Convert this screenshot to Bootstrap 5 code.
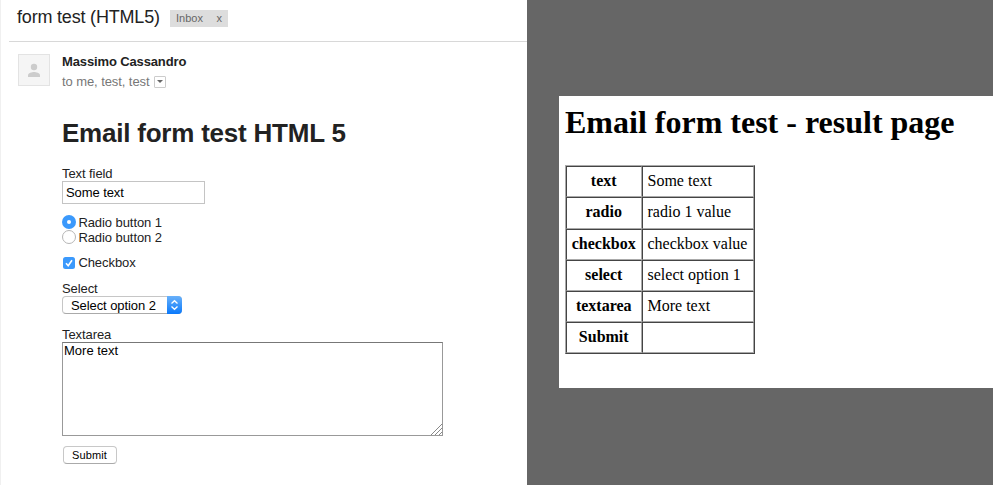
<!DOCTYPE html>
<html lang="en">
<head>
<meta charset="utf-8">
<meta name="viewport" content="width=device-width, initial-scale=1">
<title>form test (HTML5)</title>
<link href="https://cdn.jsdelivr.net/npm/bootstrap@5.3.0/dist/css/bootstrap.min.css" rel="stylesheet">
<style>
body{background:#666;font-family:"Liberation Sans",Arial,sans-serif;font-size:13px;line-height:15px;color:#222;height:485px}
.mail-pane{width:527px;height:485px;border-left:1px solid #f0f0f0}
.subject-bar{height:42px;margin-left:8px;padding:8px 0 0 8px;border-bottom:1px solid #d8d8d8}
.subject{font-size:18px;line-height:18px;width:153px;white-space:nowrap;letter-spacing:-.19px}
.inbox-tag{height:17px;width:58px;background:#ddd;color:#666;font-size:11px;line-height:17px;padding:0 6px;margin-top:2px}
.sender-row{padding:12px 0 0 17px;height:62px}
.avatar{width:32px;height:32px;border:1px solid #e3e3e3;background:#f5f5f5}
.sender{line-height:15px;letter-spacing:-.13px}
.recipients{color:#777;line-height:15px;margin-top:5px;letter-spacing:-.08px}
.drop{width:12px;height:12px;border:1px solid #ccc;border-radius:1px}
.mail-body{padding:0 0 0 61px}
.mail-title{font-size:26px;line-height:30px;font-weight:700;margin:14px 0 17px;height:31px;white-space:nowrap;letter-spacing:-.22px}
.lbl{display:block;height:15px;letter-spacing:-.08px}
.text-in{width:143px;height:23px;border:1px solid #c4c4c4;border-radius:0;padding:0 3px;font-size:13px;line-height:15px;color:#000;display:block;letter-spacing:-.08px}
.choices{margin-top:11px}
.choice{height:15px;gap:2.4px;letter-spacing:-.07px}
.choice svg{flex:none;margin-top:-2px}
.choice-check{margin-top:10px}
.choice-check svg{margin-top:0}
.sel-lbl{margin-top:11px}
.area-lbl{margin-top:13px}
.picker{width:120px;height:18px;border:1px solid #c6c6c6;border-bottom-color:#aaa;border-radius:4px;padding-left:8px;color:#000;line-height:17px;letter-spacing:-.08px}
.picker svg{margin:-1px -1px -1px 0}
.area-wrap{width:381px;height:94px}
.area-in{width:381px;height:94px;border:1px solid #999;border-top-color:#777;border-radius:0;resize:none;padding:0 1px;font-size:13px;line-height:15px;color:#000;display:block;overflow:hidden}
.grip{right:1px;bottom:1px}
.send{width:54px;height:18px;font-size:11px;line-height:15px;padding:0 1px 0 0;color:#000;background:#fff;border:1px solid #c8c8c8;border-bottom-color:#aaa;border-radius:4px;margin:10px 0 0 1px;display:block;letter-spacing:.1px}
.result-page{margin:96px 0 0 32px;height:292px;background:#fff;color:#000;font-family:"Liberation Serif","Times New Roman",serif;font-size:16px;line-height:18px;padding:8px 0 0 6px}
.result-title{font-size:32px;line-height:37px;font-weight:700;margin:0 0 24px;white-space:nowrap}
.result-table{width:190px;border:1px solid;border-color:#aaa #444 #444 #aaa;border-collapse:separate;border-spacing:0;table-layout:fixed}
.result-table th,.result-table td{height:31px;padding:0 5px 2px 4.5px;border:1px solid;border-color:#444 #aaa #aaa #444;white-space:nowrap;vertical-align:middle}
.result-table th{width:76px;text-align:center}
.result-table tr:nth-child(2)>*{height:32px}
</style>
</head>
<body class="d-flex overflow-hidden">
<main class="mail-pane bg-white flex-shrink-0">
  <header class="subject-bar d-flex align-items-start">
    <h1 class="subject fw-normal mb-0">form test (HTML5)</h1>
    <div class="inbox-tag d-flex justify-content-between"><span>Inbox</span><span>x</span></div>
  </header>
  <section class="sender-row d-flex">
    <div class="avatar me-2"><svg class="d-block" width="30" height="30" viewBox="0 0 30 30" fill="#ccc"><circle cx="15" cy="12" r="3.2"/><path d="M9 22v-1.8c0-2.1 4-3.2 6-3.2s6 1.1 6 3.2V22z"/></svg></div>
    <div class="ms-1">
      <div class="sender fw-bold">Massimo Cassandro</div>
      <div class="recipients d-flex align-items-center gap-1"><span>to me, test, test</span><span class="drop d-flex align-items-center justify-content-center"><svg width="6" height="3" viewBox="0 0 6 3"><path d="M0 0h6L3 3z" fill="#666"/></svg></span></div>
    </div>
  </section>
  <form class="mail-body">
    <h2 class="mail-title">Email form test HTML 5</h2>
    <label class="lbl" for="t">Text field</label>
    <input class="text-in" id="t" type="text" value="Some text">
    <div class="choices">
      <div class="choice d-flex align-items-center"><svg width="14" height="14" viewBox="0 0 14 14"><circle cx="7" cy="7" r="7" fill="#3b99fc"/><circle cx="7" cy="7" r="2" fill="#fff"/></svg><span>Radio button 1</span></div>
      <div class="choice d-flex align-items-center"><svg width="14" height="14" viewBox="0 0 14 14"><circle cx="7" cy="7" r="6.5" fill="#fff" stroke="#b5b5b5"/></svg><span>Radio button 2</span></div>
      <div class="choice choice-check d-flex align-items-center"><svg width="14" height="14" viewBox="0 0 14 14"><rect x="1" y="1" width="12" height="12" rx="2.5" fill="#3b99fc"/><path d="M4 7.3l2.2 2.5L10 4.2" fill="none" stroke="#fff" stroke-width="1.6"/></svg><span>Checkbox</span></div>
    </div>
    <span class="lbl sel-lbl">Select</span>
    <div class="picker d-flex justify-content-between"><span>Select option 2</span><svg width="15" height="18" viewBox="0 0 15 18"><defs><linearGradient id="g" x2="0" y2="1"><stop stop-color="#69b1fa"/><stop offset="1" stop-color="#0a79fb"/></linearGradient></defs><path d="M0 0h11a4 4 0 014 4v10a4 4 0 01-4 4H0z" fill="url(#g)"/><path d="M4.5 7.5l3-2.8 3 2.8M4.5 10.5l3 2.8 3-2.8" fill="none" stroke="#fff" stroke-width="1.3"/></svg></div>
    <label class="lbl area-lbl" for="a">Textarea</label>
    <div class="area-wrap position-relative">
      <textarea class="area-in" id="a">More text</textarea>
      <svg class="grip position-absolute" width="11" height="11" viewBox="0 0 11 11"><path d="M0 11L11 0M4 11l7-7M8 11l3-3" stroke="#888"/></svg>
    </div>
    <button class="send" type="button">Submit</button>
  </form>
</main>
<aside class="flex-grow-1">
  <section class="result-page">
    <h2 class="result-title">Email form test - result page</h2>
    <table class="result-table"><tbody>
      <tr><th>text</th><td>Some text</td></tr>
      <tr><th>radio</th><td>radio 1 value</td></tr>
      <tr><th>checkbox</th><td>checkbox value</td></tr>
      <tr><th>select</th><td>select option 1</td></tr>
      <tr><th>textarea</th><td>More text</td></tr>
      <tr><th>Submit</th><td></td></tr>
    </tbody></table>
  </section>
</aside>
<script src="https://cdn.jsdelivr.net/npm/bootstrap@5.3.0/dist/js/bootstrap.bundle.min.js"></script>
</body>
</html>
